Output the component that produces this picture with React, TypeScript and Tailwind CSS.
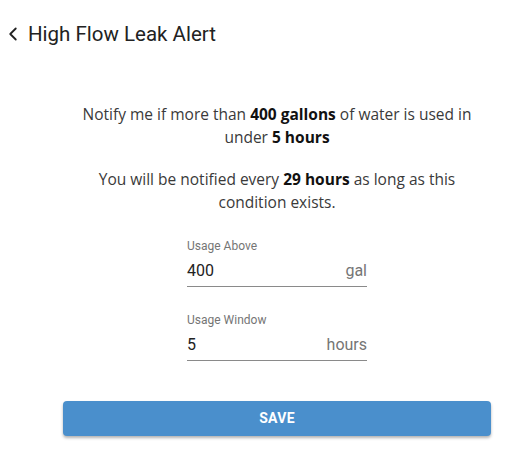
import { ChevronLeft } from 'lucide-react';

function Field({ label, value, unit }: { label: string; value: string; unit: string }) {
  return (
    <div className="w-[180px]">
      <label className="block text-[12px] leading-[16px] text-[#757575]">{label}</label>
      <div className="mt-[7px] flex items-end justify-between border-b border-[#8a8a8a] pb-[5px]">
        <span className="text-[16px] leading-[20px] text-[#222]">{value}</span>
        <span className="text-[16px] leading-[20px] text-[#757575]">{unit}</span>
      </div>
    </div>
  );
}

export default function App() {
  return (
    <div className="min-h-screen w-[508px] bg-white font-['Roboto',sans-serif]">
      {/* Header */}
      <div className="flex items-center gap-[4px] pl-[2px] pt-[22px]">
        <ChevronLeft className="h-[22px] w-[22px] text-[#222]" strokeWidth={2} />
        <h1 className="text-[20.5px] leading-[24px] text-[#222]">High Flow Leak Alert</h1>
      </div>

      <div className="ml-[63px] mt-[57px] flex w-[428px] flex-col items-center">
        <p className="w-[410px] text-center font-['Open_Sans',sans-serif] text-[15.5px] leading-[23px] text-[#3a3a3a]">
          Notify me if more than <b className="font-bold text-[#111]">400 gallons</b> of water is used in under{' '}
          <b className="font-bold text-[#111]">5 hours</b>
        </p>
        <p className="mt-[19px] w-[410px] text-center font-['Open_Sans',sans-serif] text-[15.5px] leading-[23px] text-[#3a3a3a]">
          You will be notified every <b className="font-bold text-[#111]">29 hours</b> as long as this condition exists.
        </p>

        <div className="mt-[24px] flex flex-col gap-[25px]">
          <Field label="Usage Above" value="400" unit="gal" />
          <Field label="Usage Window" value="5" unit="hours" />
        </div>

        <button className="mt-[40px] h-[35px] w-[428px] rounded-[4px] bg-[#4a8fcc] text-[14px] font-bold tracking-[0.3px] text-white shadow-[0_2px_3px_rgba(0,0,0,0.3)]">
          SAVE
        </button>
      </div>
    </div>
  );
}
